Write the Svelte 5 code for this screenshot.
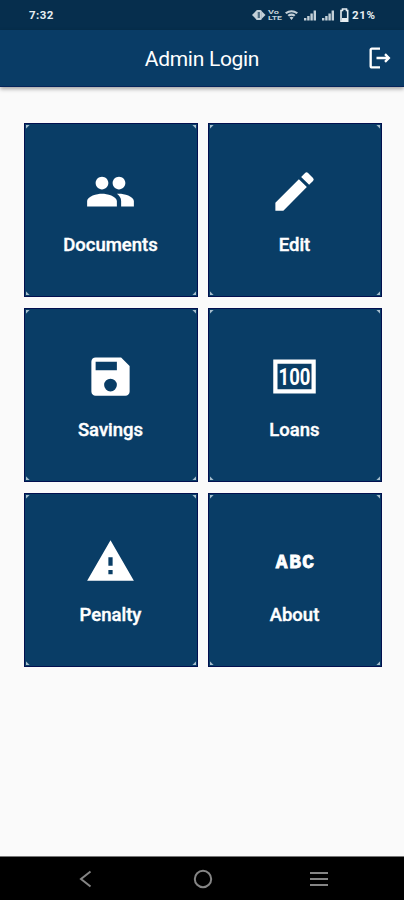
<script lang="ts">
  type Tile = { label: string; icon: string };

  const tiles: Tile[] = [
    { label: "Documents", icon: "people" },
    { label: "Edit", icon: "edit" },
    { label: "Savings", icon: "save" },
    { label: "Loans", icon: "money" },
    { label: "Penalty", icon: "warning" },
    { label: "About", icon: "abc" },
  ];
</script>

<div class="screen">
  <div class="status-bar">
    <span class="clock">7:32</span>
    <svg class="status-icons" viewBox="0 0 98 16" aria-hidden="true">
      <g fill="#c3d0d8">
        <path d="M0 8l4-4v8zM13.500 8l-4-4v8z" />
        <rect x="3.800" y="3" width="6" height="10" rx="1.500" />
        <rect x="5.700" y="5" width="2.200" height="6" fill="#4c6b81" />
        <text class="tiny" x="16" y="7" textLength="11" lengthAdjust="spacingAndGlyphs">Vo</text>
        <text class="tiny" x="16" y="13" textLength="14" lengthAdjust="spacingAndGlyphs">LTE</text>
        <path d="M33 5.500q6.500-4.500 13 0l-1.500 1.500q-5-3.500-10 0zM35.500 8q4-2.800 8 0l-1.500 1.500q-2.500-1.700-5 0zM37.500 10.500q2-1.400 4 0l-2 2.500z" />
        <path d="M52 11h2.400v2.500h-2.400zM55.200 9h2.400v4.500h-2.400zM58.400 6.500h2.400v7h-2.400zM61.600 3.500h2.400v10h-2.400z" />
        <path d="M70 11h2.400v2.500h-2.400zM73.200 9h2.400v4.500h-2.400zM76.400 6.500h2.400v7h-2.400zM79.600 3.500h2.400v10h-2.400z" />
      </g>
      <path d="M90.500 2h4v1.500h1.200v10.800h-6.700V3.500h1.500z" fill="none" stroke="#e6edf1" stroke-width="1.600" />
      <rect x="90" y="11" width="5" height="3" fill="#e6edf1" />
    </svg>
    <span class="battery">21%</span>
  </div>

  <header>
    <h1>Admin Login</h1>
    <button class="logout" aria-label="Log out">
      <svg viewBox="0 0 24 24">
        <path d="M17 8l-1.410 1.410L17.170 11H9v2h8.170l-1.580 1.580L17 16l4-4zM5 5h7V3H5c-1.100 0-2 .9-2 2v14c0 1.100.9 2 2 2h7v-2H5z" />
      </svg>
    </button>
  </header>

  <main>
    {#each tiles as tile}
      <button class="tile">
        <svg class="tile-icon" viewBox="0 0 24 24" aria-hidden="true">
          {#if tile.icon === "people"}
            <path d="M16 11c1.660 0 2.990-1.340 2.990-3S17.660 5 16 5s-3 1.340-3 3 1.340 3 3 3zm-8 0c1.660 0 2.990-1.340 2.990-3S9.660 5 8 5 5 6.340 5 8s1.340 3 3 3zm0 2c-2.330 0-7 1.170-7 3.500V19h14v-2.500c0-2.330-4.670-3.500-7-3.500zm8 0c-.29 0-.62.02-.97.05 1.160.84 1.970 1.970 1.970 3.450V19h6v-2.500c0-2.330-4.670-3.500-7-3.500z" />
          {:else if tile.icon === "edit"}
            <path d="M3 17.250V21h3.750L17.810 9.940l-3.750-3.750zM20.710 7.040a1 1 0 0 0 0-1.410l-2.340-2.340a1 1 0 0 0-1.410 0l-1.830 1.830 3.750 3.750z" />
          {:else if tile.icon === "save"}
            <path fill-rule="evenodd" d="M17 3H5a2 2 0 0 0-2 2v14a2 2 0 0 0 2 2h14a2 2 0 0 0 2-2V7zM12 19a3 3 0 1 1 0-6 3 3 0 0 1 0 6zM15 9H5V5h10z" />
          {:else if tile.icon === "money"}
            <path fill-rule="evenodd" d="M2 4h20v16H2zM4 6v12h16V6z" />
            <text class="amount" x="4.500" y="16" textLength="15" lengthAdjust="spacingAndGlyphs">100</text>
          {:else if tile.icon === "warning"}
            <path fill-rule="evenodd" d="M1 21h22L12 2zM13 18h-2v-2h2zM13 14h-2v-4h2z" />
          {:else}
            <text class="abc" x="3.200 9.500 15.700" y="15">ABC</text>
          {/if}
        </svg>
        <span>{tile.label}</span>
      </button>
    {/each}
  </main>

  <nav>
    <svg viewBox="0 0 20 20"><path d="M14.500 2.500L5 10l9.500 7.500" /></svg>
    <svg viewBox="0 0 20 20"><circle cx="10" cy="10" r="8.200" /></svg>
    <svg viewBox="0 0 20 20"><path d="M1 4h18M1 10h18M1 16h18" /></svg>
  </nav>
</div>

<style>
  :global(body) {
    margin: 0;
  }

  .screen {
    display: flex;
    flex-direction: column;
    height: 900px;
    background: #fafafa;
    color: #fff;
    font-family: Roboto, sans-serif;
  }

  .status-bar {
    display: flex;
    align-items: center;
    box-sizing: border-box;
    height: 30px;
    padding: 0 27px 0 29px;
    background: #062e4d;
    color: #e6edf1;
    font-size: 11.5px;
    font-weight: 700;
  }

  .clock {
    letter-spacing: 0.4px;
  }

  .status-icons {
    width: 98px;
    height: 16px;
    margin-left: auto;
  }

  .tiny {
    font-size: 5px;
    font-weight: 700;
  }

  .battery {
    width: 25px;
    margin-left: 2px;
    letter-spacing: 0.6px;
    white-space: nowrap;
  }

  header {
    position: relative;
    display: flex;
    align-items: center;
    justify-content: center;
    height: 56px;
    flex: none;
    background: #093c66;
    border-bottom: 1px solid #05245a;
    box-shadow: 0 2px 4px rgba(0, 0, 0, 0.35);
  }

  h1 {
    margin: 2px 0 0;
    font-size: 21px;
    font-weight: 400;
    letter-spacing: -0.3px;
    line-height: 56px;
  }

  button {
    padding: 0;
    border: 0;
    background: none;
    color: inherit;
    font-family: inherit;
  }

  .logout {
    position: absolute;
    right: 10px;
    top: 14px;
    width: 28px;
    height: 28px;
  }

  .logout svg {
    display: block;
    width: 28px;
    height: 28px;
    fill: #fff;
  }

  main {
    display: grid;
    grid-template-columns: 174px 174px;
    grid-auto-rows: 174px;
    gap: 11px 10px;
    flex: 1;
    padding: 36px 0 0 23.500px;
  }

  .tile {
    display: flex;
    flex-direction: column;
    align-items: center;
    border: 1px solid #02104f;
    /* small light ticks in the four inner corners */
    background:
      linear-gradient(135deg, #a9c0cf 2px, transparent 3px) 1px 1px / 4px 4px no-repeat,
      linear-gradient(225deg, #a9c0cf 2px, transparent 3px) calc(100% - 1px) 1px / 4px 4px no-repeat,
      linear-gradient(45deg, #a9c0cf 2px, transparent 3px) 1px calc(100% - 1px) / 4px 4px no-repeat,
      linear-gradient(315deg, #a9c0cf 2px, transparent 3px) calc(100% - 1px) calc(100% - 1px) / 4px 4px no-repeat,
      #093d66;
  }

  .tile-icon {
    width: 51px;
    height: 51px;
    margin-top: 42px;
    fill: #fff;
  }

  .amount {
    font-family: Roboto, sans-serif;
    font-size: 11.300px;
    font-weight: 700;
  }

  .abc {
    font-family: "Liberation Mono", monospace;
    font-size: 9.200px;
    font-weight: 700;
    stroke: #fff;
    stroke-width: 0.4;
  }

  .tile span {
    margin-top: 17px;
    font-size: 18.500px;
    font-weight: 500;
    line-height: 22px;
    -webkit-text-stroke: 0.4px #fff;
  }

  nav {
    display: flex;
    align-items: center;
    justify-content: space-between;
    box-sizing: border-box;
    height: 44px;
    padding: 1px 75px 0 76px;
    border-top: 1px solid #777;
    background: #000;
  }

  nav svg {
    width: 20px;
    height: 20px;
    fill: none;
    stroke: #858585;
    stroke-width: 2;
  }
</style>
